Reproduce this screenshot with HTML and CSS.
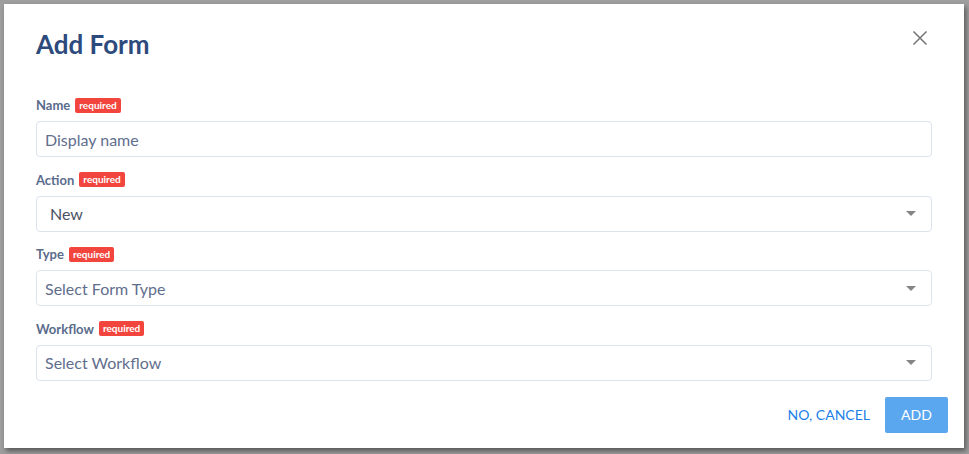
FILE: index.html
```html
<!DOCTYPE html>
<html lang="en">
<head>
<meta charset="utf-8">
<title>Add Form</title>
<link rel="stylesheet" href="styles.css">
</head>
<body>
<div class="dialog">
  <div class="header">
    <h1 class="title">Add Form</h1>
    <button class="close" aria-label="Close">
      <svg width="16" height="16" viewBox="0 0 16 16"><path d="M1.5 1.5 L14.5 14.5 M14.5 1.5 L1.5 14.5" stroke="#757575" stroke-width="1.5" fill="none"/></svg>
    </button>
  </div>
  <div class="fields">
    <div class="field">
      <div class="label-row"><span class="label">Name</span><span class="badge">required</span></div>
      <div class="input"><span class="placeholder">Display name</span></div>
    </div>
    <div class="field">
      <div class="label-row"><span class="label">Action</span><span class="badge">required</span></div>
      <div class="input select"><span class="value">New</span><span class="caret"></span></div>
    </div>
    <div class="field">
      <div class="label-row"><span class="label">Type</span><span class="badge">required</span></div>
      <div class="input select"><span class="placeholder">Select Form Type</span><span class="caret"></span></div>
    </div>
    <div class="field">
      <div class="label-row"><span class="label">Workflow</span><span class="badge">required</span></div>
      <div class="input select"><span class="placeholder">Select Workflow</span><span class="caret"></span></div>
    </div>
  </div>
  <div class="footer">
    <button class="btn-text">NO, CANCEL</button>
    <button class="btn-primary">ADD</button>
  </div>
</div>
</body>
</html>
```

FILE: styles.css
```css
* { box-sizing: border-box; }
html, body { margin: 0; padding: 0; }
body {
  background: #9e9e9e;
  width: 969px;
  height: 454px;
  overflow: hidden;
  font-family: Lato, "Liberation Sans", sans-serif;
}
.dialog {
  margin: 4px 0 0 4px;
  width: 960px;
  height: 444px;
  background: #fff;
  box-shadow: 2px 3px 5px rgba(0,0,0,0.45);
  padding: 24px 32px 15px 32px;
  display: flex;
  flex-direction: column;
}
.header {
  display: flex;
  justify-content: space-between;
  align-items: flex-start;
  height: 32px;
}
.title {
  margin: 0;
  font-size: 26px;
  line-height: 32px;
  font-weight: 700;
  color: #2c4a7c;
}
.close {
  border: 0;
  background: none;
  padding: 0;
  margin: -2px 0 0 0;
  width: 24px;
  height: 24px;
  display: flex;
  align-items: center;
  justify-content: center;
  cursor: pointer;
}
.fields {
  margin-top: 37px;
  display: flex;
  flex-direction: column;
  gap: 14.67px;
}
.field {
  display: flex;
  flex-direction: column;
  gap: 8px;
}
.label-row {
  display: flex;
  align-items: center;
  gap: 5px;
  height: 16px;
}
.label {
  font-size: 13px;
  font-weight: 700;
  color: #5a6b8c;
}
.badge {
  background: #f2453d;
  color: #fff;
  font-size: 10px;
  font-weight: 700;
  line-height: 15px;
  height: 15px;
  padding: 0 4px;
  border-radius: 2px;
}
.input {
  height: 36px;
  border: 1px solid #dbe3ee;
  border-radius: 4px;
  display: flex;
  align-items: center;
  justify-content: space-between;
  padding: 0 15px 0 8px;
  font-size: 16px;
}
.placeholder { color: #5f6e8d; }
.value { color: #4b5262; padding-left: 5px; }
.caret {
  width: 0;
  height: 0;
  border-left: 5.5px solid transparent;
  border-right: 5.5px solid transparent;
  border-top: 5px solid #858585;
}
.footer {
  margin-top: 16px;
  margin-right: -16px;
  display: flex;
  justify-content: flex-end;
  align-items: center;
  gap: 15px;
}
.btn-text {
  border: 0;
  background: none;
  color: #1c7fe6;
  font-family: Lato, "Liberation Sans", sans-serif;
  font-size: 14px;
  padding: 0;
  height: 36px;
}
.btn-primary {
  border: 0;
  background: #5aa6ef;
  color: #fff;
  font-family: Lato, "Liberation Sans", sans-serif;
  font-size: 14px;
  height: 36px;
  width: 63px;
  border-radius: 2px;
  padding: 0;
}
```
